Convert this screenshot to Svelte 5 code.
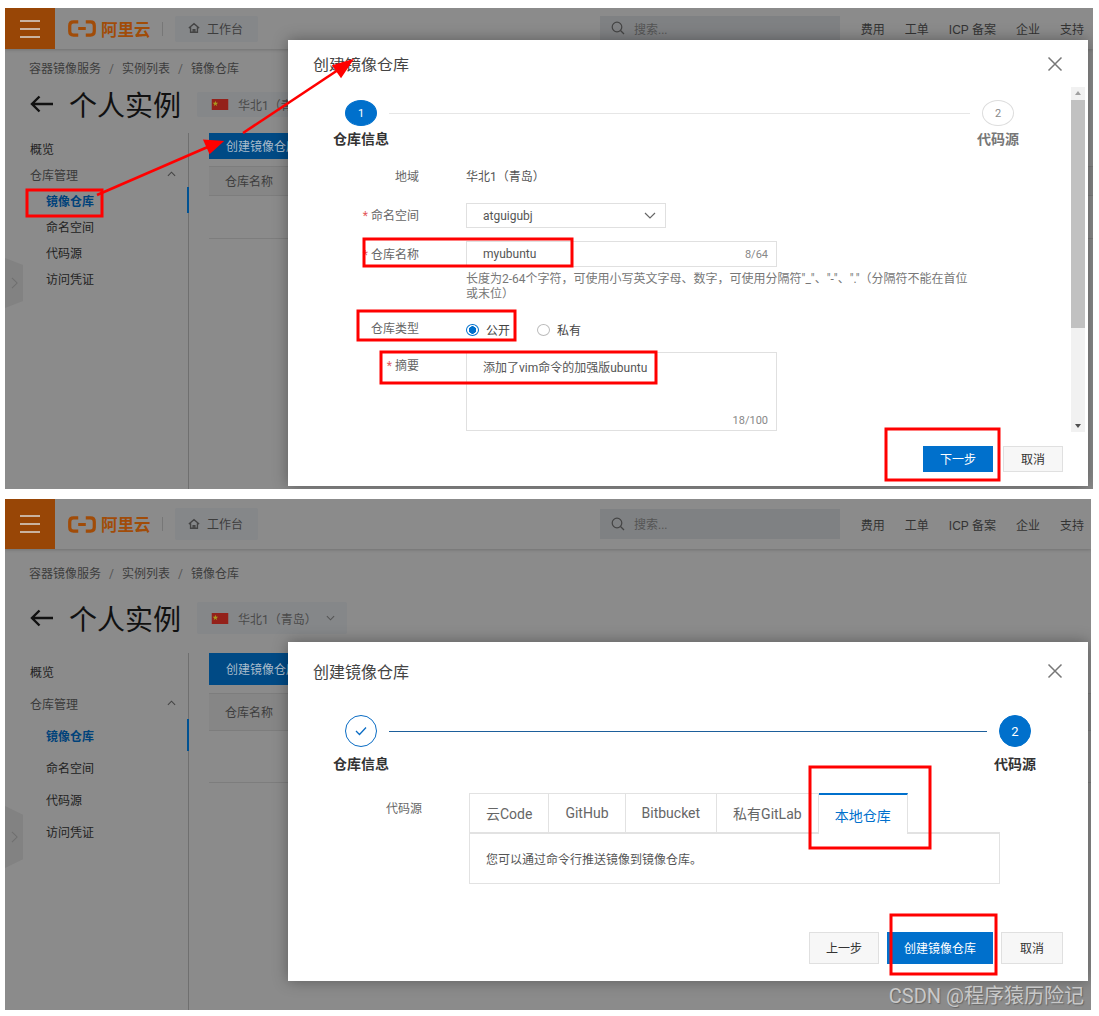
<script>
  const navLinks = ["费用", "工单", "ICP 备案", "企业", "支持"];
  const subItems = ["镜像仓库", "命名空间", "代码源", "访问凭证"];
  const tabs = ["云Code", "GitHub", "Bitbucket", "私有GitLab", "本地仓库"];
</script>

{#snippet closeIcon()}
  <svg class="close" viewBox="0 0 16 16" width="16" height="16"><path d="M1.5 1.5l13 13M14.5 1.5l-13 13" stroke="#777" stroke-width="1.5" fill="none" /></svg>
{/snippet}

{#snippet console()}
  <header class="topbar">
    <div class="burger"><span></span><span></span><span></span></div>
    <div class="logo">
      <svg viewBox="0 0 30 18" width="30" height="17" fill="none" stroke="#a14c08" stroke-width="3.4">
        <path d="M11 2H6Q2 2 2 6v6q0 4 4 4h5M19 2h5q4 0 4 4v6q0 4-4 4h-5M11 9h8" />
      </svg>
      <b>阿里云</b>
    </div>
    <i class="divider"></i>
    <div class="workbench">
      <svg viewBox="0 0 14 14" width="12" height="12" fill="none" stroke="#444" stroke-width="1.6"><path d="M1 7l6-5 6 5M3 6v6h8V6M6 12V9h2v3" /></svg>
      工作台
    </div>
    <div class="search">
      <svg viewBox="0 0 14 14" width="14" height="14" fill="none" stroke="#444" stroke-width="1.2"><circle cx="6" cy="6" r="4.8" /><path d="M9.5 9.5l3.5 3.5" /></svg>
      搜索...
    </div>
    <nav class="links">
      {#each navLinks as link}<span>{link}</span>{/each}
    </nav>
  </header>

  <div class="crumbs">容器镜像服务<em>/</em>实例列表<em>/</em>镜像仓库</div>

  <div class="heading">
    <svg viewBox="0 0 24 18" width="24" height="18" fill="none" stroke="#111" stroke-width="2.4"><path d="M23 9H2M9.5 1.5L2 9l7.5 7.5" /></svg>
    <h1>个人实例</h1>
    <div class="region">
      <span class="flag"><svg viewBox="0 0 18 12" width="18" height="11"><rect width="18" height="12" fill="#94211a" /><path d="M4 2l.8 2.2H7L5.2 5.6l.7 2.2L4 6.4 2.1 7.8l.7-2.2L1 4.2h2.2z" fill="#a89a1e" /></svg></span>
      <span>华北1（青岛）</span>
      <svg viewBox="0 0 10 6" width="9" height="6" fill="none" stroke="#555" stroke-width="1.2"><path d="M1 1l4 4 4-4" /></svg>
    </div>
  </div>

  <div class="content">
    <aside class="sidebar">
      <div class="item">概览</div>
      <div class="item group">
        仓库管理
        <svg viewBox="0 0 10 6" width="9" height="6" fill="none" stroke="#444" stroke-width="1.2"><path d="M1 5l4-4 4 4" /></svg>
      </div>
      {#each subItems as sub, i}
        <div class="item sub" class:active={i === 0}>{sub}</div>
      {/each}
    </aside>
    <div class="list">
      <div class="create">创建镜像仓库</div>
      <div class="table-head">仓库名称</div>
      <div class="table-row"></div>
    </div>
  </div>

  <div class="side-tab">
    <svg viewBox="0 0 8 14" width="7" height="12" fill="none" stroke="#6f6f6f" stroke-width="1.2"><path d="M1 1l6 6-6 6" /></svg>
  </div>
{/snippet}

<main class="page">
  <section class="shot tight">
    {@render console()}

    <div class="modal">
      <div class="modal-head"><span>创建镜像仓库</span>{@render closeIcon()}</div>
      <div class="modal-scroll">
        <div class="steps">
          <div class="step"><span class="dot on">1</span><strong>仓库信息</strong></div>
          <i class="rail"></i>
          <div class="step"><span class="dot">2</span><strong class="todo">代码源</strong></div>
        </div>

        <div class="row region-row"><label>地域</label><span class="value">华北1（青岛）</span></div>
        <div class="row name-space">
          <label><u>*</u>命名空间</label>
          <div class="field select">atguigubj
            <svg viewBox="0 0 12 7" width="12" height="7" fill="none" stroke="#666" stroke-width="1.2"><path d="M1 1l5 5 5-5" /></svg>
          </div>
        </div>
        <div class="row repo-name">
          <label><u>*</u>仓库名称</label>
          <div class="field wide">myubuntu<small>8/64</small></div>
        </div>
        <p class="hint">长度为2-64个字符，可使用小写英文字母、数字，可使用分隔符"_"、"-"、"."（分隔符不能在首位或末位）</p>
        <div class="row repo-type">
          <label>仓库类型</label>
          <div class="radios">
            <span class="radio checked"></span><span class="radio-text">公开</span>
            <span class="radio"></span><span class="radio-text">私有</span>
          </div>
        </div>
        <div class="row summary">
          <label><u>*</u>摘要</label>
          <div class="field area">添加了vim命令的加强版ubuntu<small>18/100</small></div>
        </div>

        <div class="scrollbar">
          <span class="arrow up"></span>
          <span class="thumb"></span>
          <span class="arrow down"></span>
        </div>
      </div>
      <div class="modal-foot">
        <button class="btn primary">下一步</button>
        <button class="btn">取消</button>
      </div>
    </div>

    <svg class="notes" viewBox="0 0 1094 481" width="1094" height="481">
      <g fill="none" stroke="#f00" stroke-width="3">
        <rect x="22" y="182" width="75" height="26" />
        <rect x="359" y="231" width="208" height="27" />
        <rect x="353" y="303" width="157" height="29" />
        <rect x="376" y="344" width="275" height="31" />
        <rect x="881" y="421" width="113" height="51" />
      </g>
      <g stroke="#f00" stroke-width="2.6" fill="#f00">
        <path d="M92 187L205 138" />
        <path d="M216 134l-16-1 5 11z" />
        <path d="M238 125L336 60" />
        <path d="M346 53l-17 5 7 10z" />
      </g>
    </svg>
  </section>

  <section class="shot roomy">
    {@render console()}

    <div class="modal">
      <div class="modal-head"><span>创建镜像仓库</span>{@render closeIcon()}</div>
      <div class="steps">
        <div class="step">
          <span class="dot done"><svg viewBox="0 0 12 10" width="12" height="10" fill="none" stroke="#0a6cc4" stroke-width="1.3"><path d="M1 5l3.5 3.5L11 1.5" /></svg></span>
          <strong>仓库信息</strong>
        </div>
        <i class="rail on"></i>
        <div class="step"><span class="dot on">2</span><strong>代码源</strong></div>
      </div>

      <div class="source">
        <label>代码源</label>
        <div class="source-box">
          <div class="tabs">
            {#each tabs as tab, i}
              <span class="tab" class:current={i === tabs.length - 1}>{tab}</span>
            {/each}
          </div>
          <div class="panel">您可以通过命令行推送镜像到镜像仓库。</div>
        </div>
      </div>

      <div class="modal-foot">
        <button class="btn">上一步</button>
        <button class="btn primary wide-btn">创建镜像仓库</button>
        <button class="btn">取消</button>
      </div>
    </div>

    <svg class="notes" viewBox="0 0 1094 511" width="1094" height="511">
      <g fill="none" stroke="#f00" stroke-width="3">
        <rect x="805" y="268" width="120" height="81" />
        <rect x="886" y="416" width="105" height="59" />
      </g>
    </svg>
    <div class="watermark">CSDN @程序猿历险记</div>
  </section>
</main>

<style>
  :global(body) {
    margin: 0;
    background: #fff;
  }
  .page {
    width: 1088px;
    padding: 8px 0 0 5px;
    display: flex;
    flex-direction: column;
    gap: 10px;
    font-family: Roboto, "Noto Sans CJK SC", sans-serif;
    font-size: 12px;
    color: #555;
  }
  .shot {
    position: relative;
    overflow: hidden;
    background: #8b8b8b;
    display: flex;
    flex-direction: column;
    color: #2b2b2b;
  }
  .tight {
    height: 481px;
    --bar: 41px;
    --crumb-gap: 10px;
    --head-gap: 10px;
    --head-h: 30px;
    --body-gap: 14px;
    --item: 26px;
    --btn: 26px;
    --thead: 30px;
    --trow: 43px;
    --tab-top: 250px;
    --tab-h: 50px;
    --pill: 25px;
    --edge: 9px;
  }
  .roomy {
    height: 511px;
    margin-right: 2px;
    --bar: 50px;
    --crumb-gap: 15px;
    --head-gap: 17px;
    --head-h: 34px;
    --body-gap: 18px;
    --item: 32px;
    --btn: 32px;
    --thead: 38px;
    --trow: 52px;
    --tab-top: 307px;
    --tab-h: 62px;
    --pill: 32px;
    --edge: 7px;
  }

  .topbar {
    height: var(--bar);
    flex: none;
    display: flex;
    align-items: center;
    box-shadow: 0 1px 3px rgba(0, 0, 0, 0.18);
  }
  .burger {
    width: 50px;
    height: 100%;
    background: #984606;
    display: flex;
    flex-direction: column;
    justify-content: center;
    align-items: center;
    gap: 6px;
  }
  .burger span {
    width: 20px;
    height: 2px;
    background: #c9b3a0;
  }
  .logo {
    margin-left: 12px;
    display: flex;
    align-items: center;
    gap: 4px;
    color: #a14c08;
    font-size: 16.5px;
    width: 83px;
    white-space: nowrap;
  }
  .logo svg {
    flex: none;
  }
  .divider {
    width: 1px;
    height: 14px;
    margin-left: 12px;
    background: #777;
  }
  .workbench {
    margin-left: 12px;
    width: 83px;
    height: calc(var(--bar) - 15px);
    box-sizing: border-box;
    padding: 0 0 1px 13px;
    display: flex;
    align-items: center;
    gap: 7px;
    background: #858789;
    border-radius: 2px;
    color: #3d3d3d;
  }
  .roomy .workbench {
    height: 32px;
  }
  .search {
    margin-left: 342px;
    width: 240px;
    height: calc(var(--bar) - 15px);
    box-sizing: border-box;
    padding: 0 0 1px 11px;
    display: flex;
    align-items: center;
    gap: 9px;
    background: #7f8183;
    color: #555;
  }
  .roomy .search {
    height: 30px;
  }
  .links {
    margin-left: auto;
    padding-right: var(--edge);
    display: flex;
    gap: 20px;
    font-family: "Liberation Sans", "Noto Sans CJK SC", sans-serif;
    color: #333;
  }

  .crumbs {
    margin: var(--crumb-gap) 0 0 24px;
    line-height: 20px;
    color: #3d3d3d;
  }
  .crumbs em {
    margin: 0 8px;
    font-style: normal;
    color: #555;
  }
  .heading {
    margin: var(--head-gap) 0 0 25px;
    height: var(--head-h);
    display: flex;
    align-items: center;
  }
  h1 {
    margin: 0 0 0 15px;
    font-size: 28px;
    font-weight: 400;
    color: #111;
    width: 128px;
  }
  .region {
    height: var(--pill);
    width: 150px;
    box-sizing: border-box;
    padding-left: 14px;
    display: flex;
    align-items: center;
    gap: 9px;
    background: #858789;
    border-radius: 2px;
    color: #4a4a4a;
  }
  .flag {
    display: flex;
  }
  .content {
    margin-top: var(--body-gap);
    flex: 1;
    display: flex;
  }
  .sidebar {
    width: 158px;
    padding: 2px 0 0 25px;
    border-right: 1px solid #6f6f6f;
  }
  .item {
    height: var(--item);
    display: flex;
    align-items: center;
    color: #222;
    position: relative;
  }
  .group {
    justify-content: space-between;
    padding-right: 12px;
    color: #3a3a3a;
  }
  .sub {
    padding-left: 16px;
  }
  .active {
    color: #00427a;
    font-weight: 700;
  }
  .active::after {
    content: "";
    position: absolute;
    right: -1px;
    top: 0;
    bottom: 0;
    width: 2px;
    background: #005192;
  }
  .list {
    flex: 1;
    padding-left: 20px;
  }
  .create {
    width: 183px;
    height: var(--btn);
    box-sizing: border-box;
    display: flex;
    align-items: center;
    padding: 0 0 2px 17px;
    background: #004a85;
    color: #a9bccb;
  }
  .table-head {
    height: var(--thead);
    margin-top: 7px;
    display: flex;
    align-items: center;
    padding: 0 0 2px 16px;
    background: #868686;
    border-top: 1px solid #7d7d7d;
    border-bottom: 1px solid #7d7d7d;
    box-sizing: border-box;
    color: #3d3d3d;
  }
  .roomy .table-head {
    margin-top: 8px;
  }
  .table-row {
    height: var(--trow);
    box-sizing: border-box;
    border-bottom: 1px solid #7d7d7d;
  }
  .side-tab {
    position: absolute;
    left: 0;
    top: var(--tab-top);
    width: 18px;
    height: var(--tab-h);
    background: #828282;
    clip-path: polygon(0 0, 100% 14%, 100% 86%, 0 100%);
    display: flex;
    align-items: center;
    justify-content: center;
  }

  .modal {
    position: absolute;
    left: 283px;
    width: 800px;
    background: #fff;
    box-shadow: 0 0 14px rgba(0, 0, 0, 0.35);
    display: flex;
    flex-direction: column;
    color: #555;
  }
  .tight .modal {
    top: 32px;
    height: 446px;
  }
  .roomy .modal {
    top: 143px;
    height: 339px;
  }
  .modal-head {
    flex: none;
    height: 47px;
    padding: 0 25px;
    display: flex;
    align-items: center;
    justify-content: space-between;
    font-size: 16px;
    color: #444;
  }
  .tight .modal-head span {
    transform: scaleY(0.9);
  }
  .roomy .modal-head {
    height: 58px;
  }
  .modal-scroll {
    position: relative;
    height: 345px;
    flex: none;
    padding-top: 13px;
    box-sizing: border-box;
  }
  .steps {
    display: flex;
    align-items: flex-start;
    padding: 0 0 0 45px;
    width: 693px;
  }
  .roomy .steps {
    padding-top: 15px;
    width: 710px;
  }
  .step {
    width: 56px;
    display: flex;
    flex-direction: column;
    align-items: center;
    gap: 4px;
  }
  .roomy .step {
    gap: 8px;
  }
  .step strong {
    font-size: 14px;
    line-height: 18px;
    white-space: nowrap;
    color: #333;
  }
  .step strong.todo {
    color: #777;
  }
  .dot {
    width: 32px;
    height: 26px;
    box-sizing: border-box;
    border-radius: 50%;
    border: 1px solid #ddd;
    display: flex;
    align-items: center;
    justify-content: center;
    color: #888;
    font-size: 11px;
  }
  .roomy .dot {
    height: 32px;
    font-size: 13px;
  }
  .dot.on {
    background: #0070cc;
    border-color: #0070cc;
    color: #fff;
  }
  .dot.done {
    border-color: #0a6cc4;
  }
  .rail {
    flex: 1;
    height: 1px;
    margin: 13px 0 0 0;
    background: #e6e6e6;
  }
  .rail.on {
    margin-top: 16px;
    background: #1d5f9b;
  }

  .row {
    display: flex;
    align-items: flex-start;
  }
  label {
    width: 131px;
    flex: none;
    margin-right: 47px;
    text-align: right;
    line-height: 20px;
    color: #666;
  }
  label u {
    margin-right: 3px;
    text-decoration: none;
    color: #e4595a;
  }
  .region-row {
    margin-top: 19px;
  }
  .value {
    line-height: 20px;
  }
  .name-space {
    margin-top: 16px;
  }
  .name-space label {
    line-height: 27px;
  }
  .repo-name label {
    line-height: 29px;
  }
  .field {
    position: relative;
    box-sizing: border-box;
    border: 1px solid #e0e0e0;
    padding-left: 16px;
    display: flex;
    align-items: center;
    color: #555;
  }
  .select {
    width: 200px;
    height: 25px;
    justify-content: space-between;
    padding-right: 9px;
  }
  .repo-name {
    margin-top: 11px;
  }
  .wide {
    width: 311px;
    height: 26px;
  }
  .field small {
    position: absolute;
    right: 8px;
    font-size: 11px;
    color: #888;
  }
  .hint {
    margin: 2px 0 0 178px;
    width: 510px;
    font-size: 12px;
    line-height: 15px;
    color: #777;
  }
  .repo-type {
    margin-top: 16px;
  }
  .repo-type label {
    margin-top: 1px;
  }
  .radios {
    margin-top: 2px;
    display: flex;
    align-items: center;
    height: 20px;
  }
  .radio {
    width: 13px;
    height: 12px;
    box-sizing: border-box;
    border: 1px solid #bbb;
    border-radius: 50%;
    margin-right: 7px;
  }
  .radio.checked {
    border: 1px solid #0070cc;
    background: radial-gradient(circle, #0070cc 0 3.5px, #fff 4px);
  }
  .radio-text {
    width: 25px;
    margin: 0 26px 2px 0;
    color: #444;
  }
  .summary {
    margin-top: 12px;
  }
  .summary label {
    margin-top: 4px;
  }
  .area {
    width: 311px;
    height: 79px;
    padding-top: 7px;
    align-items: flex-start;
    line-height: 16px;
    color: #555;
  }
  .area small {
    bottom: 1px;
  }
  .scrollbar {
    position: absolute;
    right: 3px;
    top: 0;
    bottom: 0;
    width: 14px;
    background: #f1f1f1;
    display: flex;
    flex-direction: column;
    align-items: center;
  }
  .arrow {
    height: 13px;
    flex: none;
    position: relative;
    width: 100%;
  }
  .arrow::after {
    content: "";
    position: absolute;
    left: 4px;
    border: 3px solid transparent;
  }
  .up::after {
    top: 1px;
    border-bottom: 4px solid #a0a0a0;
  }
  .down {
    margin-top: auto;
  }
  .down::after {
    top: 5px;
    border-top: 4px solid #505050;
  }
  .thumb {
    width: 100%;
    height: 228px;
    background: #c1c1c1;
  }
  .modal-foot {
    display: flex;
    justify-content: flex-end;
    gap: 10px;
    padding: 14px 25px 0 0;
  }
  .roomy .modal-foot {
    gap: 8px;
    margin-top: auto;
    padding: 0 25px 17px 0;
  }
  .btn {
    width: 60px;
    height: 26px;
    padding: 0 0 2px;
    box-sizing: border-box;
    border: 1px solid #e0e0e0;
    background: #f7f7f7;
    font: inherit;
    color: #333;
  }
  .roomy .btn {
    height: 32px;
    width: 62px;
  }
  .btn.primary {
    width: 70px;
    background: #0070cc;
    border-color: #0070cc;
    color: #fff;
  }
  .roomy .btn:first-child {
    width: 70px;
  }
  .roomy .wide-btn.primary {
    width: 106px;
  }

  .source {
    margin-top: 20px;
    display: flex;
    align-items: flex-start;
  }
  .source label {
    width: 134px;
    margin-right: 47px;
    line-height: 32px;
  }
  .source-box {
    width: 531px;
  }
  .tabs {
    height: 39px;
    display: flex;
    font-size: 14px;
    color: #666;
  }
  .tab {
    box-sizing: border-box;
    padding: 0 16px;
    border: 1px solid #e2e2e2;
    border-left: 0;
    border-bottom: 0;
    display: flex;
    align-items: center;
  }
  .tab:first-child {
    border-left: 1px solid #e2e2e2;
  }
  .tab.current {
    border-top: 2px solid #0070cc;
    color: #0070cc;
    background: #fff;
    margin-bottom: -2px;
    z-index: 1;
  }
  .panel {
    height: 52px;
    box-sizing: border-box;
    border: 1px solid #e2e2e2;
    border-top-width: 2px;
    padding-left: 16px;
    display: flex;
    align-items: center;
  }

  .notes {
    position: absolute;
    left: 0;
    top: 0;
    pointer-events: none;
  }
  .watermark {
    position: absolute;
    right: var(--edge);
    bottom: 2px;
    font-size: 20px;
    line-height: 24px;
    color: #c8c8c8;
    text-shadow: 1px 1px 1px #666;
  }
</style>
